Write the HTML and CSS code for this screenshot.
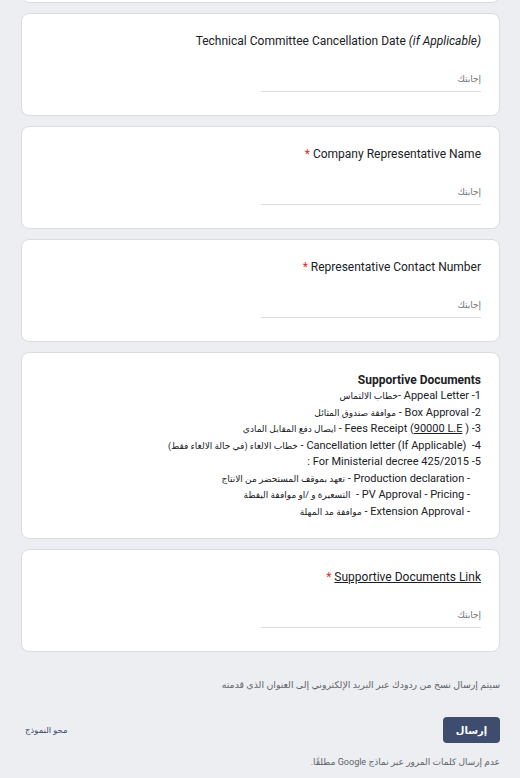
FILE: index.html
```html
<!DOCTYPE html>
<html lang="ar" dir="rtl">
<head>
<meta charset="utf-8">
<title>Form</title>
<link rel="stylesheet" href="styles.css">
</head>
<body>
<div class="form">
  <div class="card stub"></div>

  <div class="card">
    <div class="q-title" dir="ltr">Technical Committee Cancellation Date <i>(if Applicable)</i></div>
    <div class="answer"><span class="ph">إجابتك</span></div>
  </div>

  <div class="card">
    <div class="q-title">Company Representative Name <span class="req">*</span></div>
    <div class="answer"><span class="ph">إجابتك</span></div>
  </div>

  <div class="card">
    <div class="q-title">Representative Contact Number <span class="req">*</span></div>
    <div class="answer"><span class="ph">إجابتك</span></div>
  </div>

  <div class="card">
    <div class="q-title bold">Supportive Documents</div>
    <div class="desc">
      <p>1- Appeal Letter -<span class="ar">خطاب الالتماس</span></p>
      <p>2- Box Approval - <span class="ar">موافقة صندوق المثائل</span></p>
      <p>3- Fees Receipt (<u>90000 L.E</u> ) - <span class="ar">ايصال دفع المقابل المادي</span></p>
      <p>4-&nbsp; Cancellation letter (If Applicable) - <span class="ar">خطاب الالغاء (في حالة الالغاء فقط)</span></p>
      <p>5- For Ministerial decree 425/2015 :</p>
      <p class="sub">- Production declaration - <span class="ar">تعهد بموقف المستحضر من الانتاج</span></p>
      <p class="sub">- PV Approval - Pricing -&nbsp; <span class="ar">التسعيرة و /او موافقة اليقظة</span></p>
      <p class="sub">- Extension Approval - <span class="ar">موافقة مد المهلة</span></p>
    </div>
  </div>

  <div class="card">
    <div class="q-title"><u>Supportive Documents Link</u> <span class="req">*</span></div>
    <div class="answer"><span class="ph">إجابتك</span></div>
  </div>
</div>

<div class="footer">
  <p class="notice">سيتم إرسال نسخ من ردودك عبر البريد الإلكتروني إلى العنوان الذي قدمته</p>
  <div class="actions">
    <button class="submit" type="button">إرسال</button>
    <span class="clear">محو النموذج</span>
  </div>
  <p class="warn">عدم إرسال كلمات المرور عبر نماذج Google مطلقًا.</p>
</div>
</body>
</html>
```

FILE: styles.css
```css
html, body {
  margin: 0;
  padding: 0;
}
body {
  background: #eceef1;
  font-family: Roboto, "Noto Sans", "DejaVu Sans", sans-serif;
  color: #202124;
  height: 778px;
  overflow: hidden;
}
.form {
  display: flex;
  flex-direction: column;
  gap: 10px;
  margin: 0 20px 0 21px;
}
.card {
  background: #fff;
  border: 1px solid #dadce0;
  border-radius: 8px;
  padding: 19px 18px 23px;
}
.card.stub {
  height: 40px;
  padding: 0;
  margin-top: -39px;
}
.q-title {
  font-size: 12px;
  line-height: 16px;
  text-align: right;
}
.q-title.bold {
  font-weight: bold;
}
.req {
  color: #d93025;
}
.answer {
  margin-top: 18px;
  width: 50%;
  height: 24px;
  border-bottom: 1px solid #dadce0;
  display: flex;
  align-items: center;
}
.ph {
  font-size: 9px;
  color: #70757a;
}
.desc {
  font-size: 11px;
  line-height: 16.5px;
  margin-bottom: -5px;
}
.desc p {
  margin: 0;
  white-space: nowrap;
}
.desc p.sub {
  margin-right: 11px;
}
.ar {
  font-size: 9px;
}
.footer {
  padding: 0 20px 0 25px;
}
.notice {
  margin: 26px 0 0;
  font-size: 9.4px;
  line-height: 14px;
  color: #5f6368;
}
.actions {
  margin-top: 25px;
  display: flex;
  justify-content: space-between;
  align-items: center;
}
.submit {
  width: 57px;
  height: 26px;
  border: none;
  border-radius: 4px;
  background: #3e4d6e;
  color: #fff;
  font-family: inherit;
  font-size: 10px;
  font-weight: bold;
  padding: 0;
}
.clear {
  font-size: 8.5px;
  color: #3c4b6b;
}
.warn {
  margin: 13px 0 0;
  font-size: 9px;
  line-height: 12px;
  color: #5f6368;
}
```
